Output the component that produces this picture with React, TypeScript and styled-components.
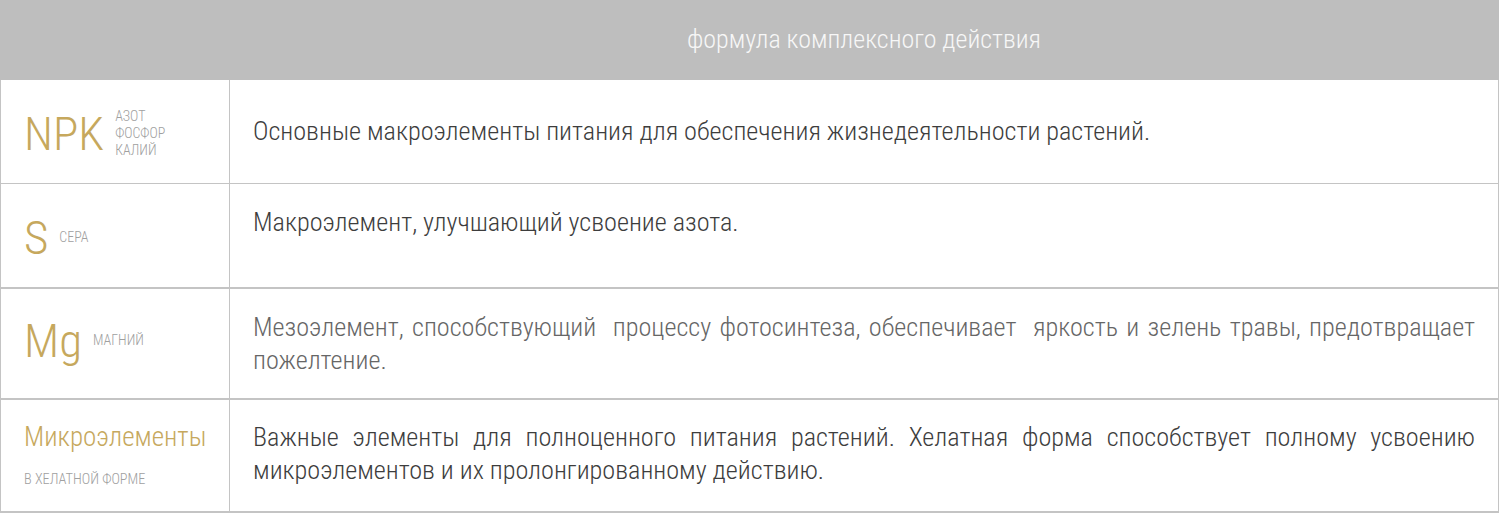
import React from "react";
import styled, { createGlobalStyle } from "styled-components";

const Global = createGlobalStyle`
  html, body { margin: 0; padding: 0; background: #ffffff; }
  body { font-family: "Roboto Condensed", "Roboto", "Liberation Sans Narrow", sans-serif; font-weight: 300; }
`;

const Table = styled.div`
  width: 1499px;
  display: flex;
  flex-direction: column;
`;

const Header = styled.div`
  display: grid;
  grid-template-columns: 229px 1fr;
  height: 80px;
  background: #bebebe;
`;

const HeaderTitle = styled.div`
  grid-column: 2;
  display: flex;
  align-items: center;
  justify-content: center;
  color: #f7f7f7;
  font-size: 26px;
  font-weight: 300;
  padding-bottom: 2px;
`;

const Row = styled.div<{ $h: number; $b: number }>`
  display: grid;
  grid-template-columns: 229px 1fr;
  height: ${(p) => p.$h}px;
  border-bottom: ${(p) => p.$b}px solid #c4c4c4;
  border-left: 1px solid #c4c4c4;
  border-right: 1px solid #c4c4c4;
  box-sizing: content-box;
`;

const Side = styled.div<{ $pt: number }>`
  border-right: 1px solid #c4c4c4;
  padding: ${(p) => p.$pt}px 0 0 23px;
  display: flex;
  flex-direction: column;
  align-items: flex-start;
`;

const Mark = styled.div`
  display: flex;
  align-items: center;
`;

const Symbol = styled.span`
  color: #c6a85d;
  font-size: 47px;
  line-height: 47px;
  font-weight: 300;
`;

const Labels = styled.div`
  display: flex;
  flex-direction: column;
  margin-left: 11px;
  color: #a0a0a0;
  font-size: 14px;
  line-height: 17px;
  text-transform: uppercase;
`;

const WordSymbol = styled.span`
  color: #c6a85d;
  font-size: 27px;
  line-height: 33px;
`;

const SubLabel = styled.span`
  color: #a0a0a0;
  font-size: 14.3px;
  line-height: 16px;
  margin-top: 17px;
  text-transform: uppercase;
`;

const Desc = styled.div<{ $center?: boolean; $pt: number; $light?: boolean }>`
  padding: ${(p) => p.$pt}px 23px 0 23px;
  display: flex;
  align-items: ${(p) => (p.$center ? "center" : "flex-start")};
  color: ${(p) => (p.$light ? "#666666" : "#3d3d3d")};
  font-size: 26.2px;
  line-height: 33px;
  text-align: justify;
`;

const DescText = styled.p`
  margin: 0;
  width: 100%;
`;

export default function App() {
  return (
    <>
      <Global />
      <Table>
        <Header>
          <HeaderTitle>формула комплексного действия</HeaderTitle>
        </Header>

        <Row $h={103} $b={1}>
          <Side $pt={28}>
            <Mark>
              <Symbol>NPK</Symbol>
              <Labels>
                <span>Азот</span>
                <span>Фосфор</span>
                <span>Калий</span>
              </Labels>
            </Mark>
          </Side>
          <Desc $center $pt={0}>
            <DescText>
              Основные макроэлементы питания для обеспечения жизнедеятельности растений.
            </DescText>
          </Desc>
        </Row>

        <Row $h={103} $b={2}>
          <Side $pt={30}>
            <Mark>
              <Symbol>S</Symbol>
              <Labels>
                <span>Сера</span>
              </Labels>
            </Mark>
          </Side>
          <Desc $pt={22}>
            <DescText>Макроэлемент, улучшающий усвоение азота.</DescText>
          </Desc>
        </Row>

        <Row $h={109} $b={2}>
          <Side $pt={28}>
            <Mark>
              <Symbol>Mg</Symbol>
              <Labels>
                <span>Магний</span>
              </Labels>
            </Mark>
          </Side>
          <Desc $pt={22} $light>
            <DescText>
              Мезоэлемент, способствующий{"\u00a0"} процессу фотосинтеза, обеспечивает{"\u00a0"} яркость и зелень травы, предотвращает пожелтение.
            </DescText>
          </Desc>
        </Row>

        <Row $h={111} $b={2}>
          <Side $pt={21}>
            <WordSymbol>Микроэлементы</WordSymbol>
            <SubLabel>в хелатной форме</SubLabel>
          </Side>
          <Desc $pt={21}>
            <DescText>
              Важные элементы для полноценного питания растений. Хелатная форма способствует полному усвоению микроэлементов и их пролонгированному действию.
            </DescText>
          </Desc>
        </Row>
      </Table>
    </>
  );
}
